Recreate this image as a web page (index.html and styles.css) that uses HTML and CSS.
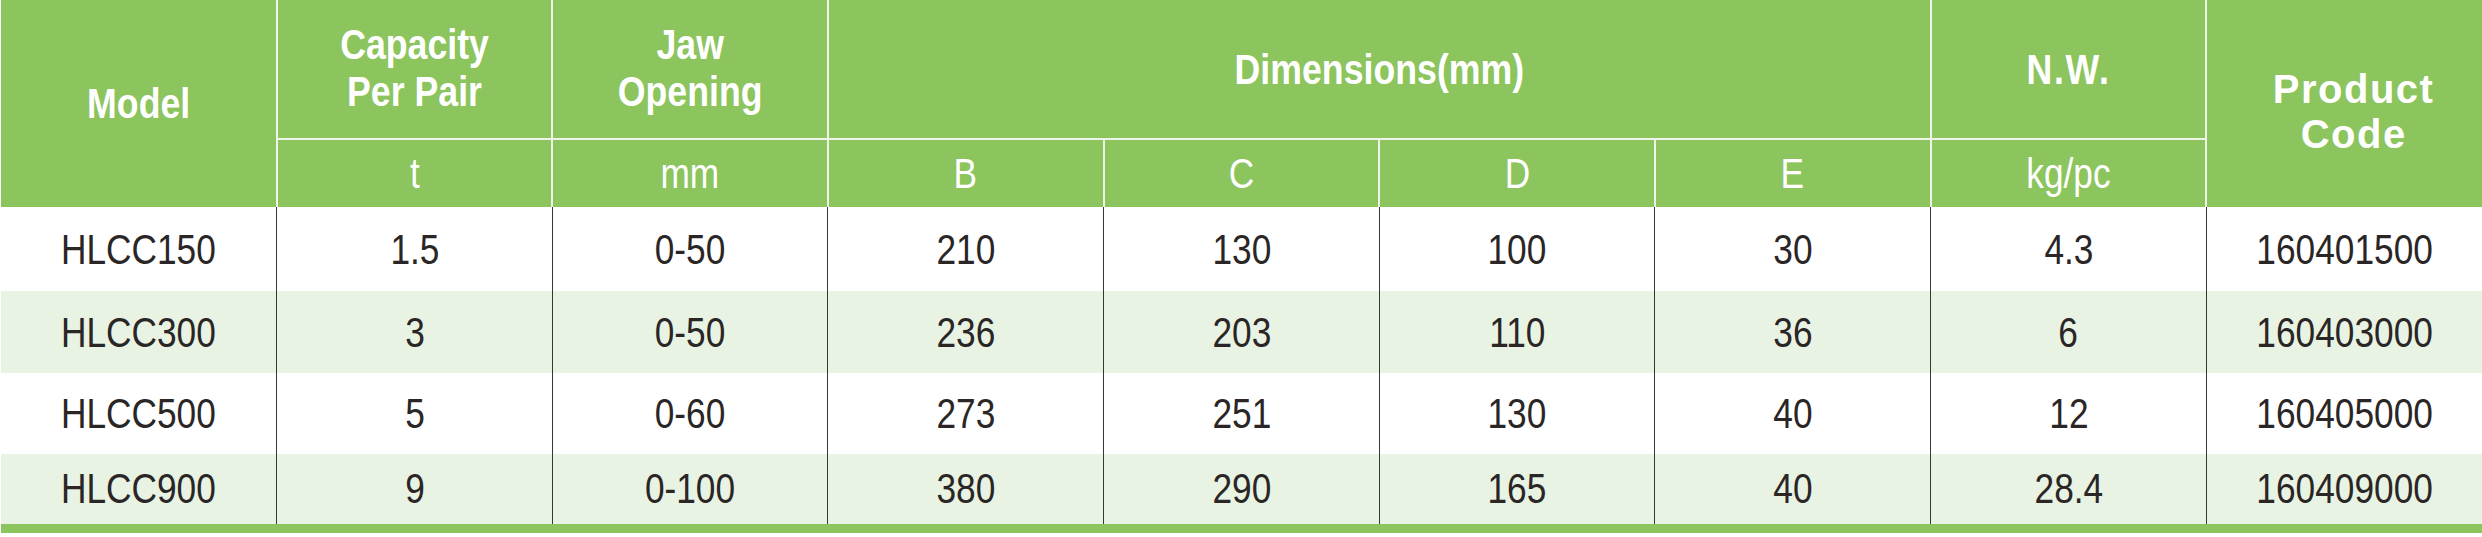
FILE: index.html
```html
<!DOCTYPE html>
<html lang="en">
<head>
<meta charset="utf-8">
<title>HLCC Specifications</title>
<link rel="stylesheet" href="styles.css">
</head>
<body>
<table class="spec">
  <colgroup>
    <col><col><col><col><col><col><col><col><col>
  </colgroup>
  <thead>
    <tr class="head-top">
      <th rowspan="2" class="h-bold"><span class="n">Model</span></th>
      <th class="h-bold h-two"><span class="n">Capacity<br>Per Pair</span></th>
      <th class="h-bold h-two"><span class="n">Jaw<br>Opening</span></th>
      <th colspan="4" class="h-bold"><span class="n">Dimensions(mm)</span></th>
      <th class="h-bold"><span class="n nw">N.W.</span></th>
      <th rowspan="2" class="h-code">Product<br>Code</th>
    </tr>
    <tr class="head-sub">
      <th><span class="n">t</span></th>
      <th><span class="n">mm</span></th>
      <th><span class="n">B</span></th>
      <th><span class="n">C</span></th>
      <th><span class="n">D</span></th>
      <th><span class="n">E</span></th>
      <th><span class="n">kg/pc</span></th>
    </tr>
  </thead>
  <tbody>
    <tr class="r1">
      <td><span class="n">HLCC150</span></td><td><span class="n">1.5</span></td><td><span class="n">0-50</span></td><td><span class="n">210</span></td><td><span class="n">130</span></td><td><span class="n">100</span></td><td><span class="n">30</span></td><td><span class="n">4.3</span></td><td><span class="n">160401500</span></td>
    </tr>
    <tr class="r2 alt">
      <td><span class="n">HLCC300</span></td><td><span class="n">3</span></td><td><span class="n">0-50</span></td><td><span class="n">236</span></td><td><span class="n">203</span></td><td><span class="n">110</span></td><td><span class="n">36</span></td><td><span class="n">6</span></td><td><span class="n">160403000</span></td>
    </tr>
    <tr class="r3">
      <td><span class="n">HLCC500</span></td><td><span class="n">5</span></td><td><span class="n">0-60</span></td><td><span class="n">273</span></td><td><span class="n">251</span></td><td><span class="n">130</span></td><td><span class="n">40</span></td><td><span class="n">12</span></td><td><span class="n">160405000</span></td>
    </tr>
    <tr class="r4 alt">
      <td><span class="n">HLCC900</span></td><td><span class="n">9</span></td><td><span class="n">0-100</span></td><td><span class="n">380</span></td><td><span class="n">290</span></td><td><span class="n">165</span></td><td><span class="n">40</span></td><td><span class="n">28.4</span></td><td><span class="n">160409000</span></td>
    </tr>
  </tbody>
</table>
</body>
</html>
```
FILE: styles.css
```css
html, body {
  margin: 0;
  padding: 0;
  background: #ffffff;
}

body {
  padding-left: 1px;
}

.spec {
  width: 2481px;
  table-layout: fixed;
  border-collapse: collapse;
  font-family: "Liberation Sans", Arial, sans-serif;
  color: #2b2626;
}

/* Arial Narrow look: condensed Liberation Sans */
.n {
  display: inline-block;
  transform: scaleX(0.82);
  transform-origin: center center;
  white-space: nowrap;
}

.spec th {
  background: #8cc45d;
  color: #ffffff;
  padding: 0;
  text-align: center;
  vertical-align: middle;
  border: 2px solid #eef4e8;
  border-top: none;
  font-weight: normal;
  font-size: 43px;
}

.spec thead th:first-child {
  border-left: none;
}

.spec thead th:last-child {
  border-right: none;
}

.spec thead tr.head-sub th,
.spec thead th[rowspan] {
  border-bottom: none;
}

.head-top {
  height: 139px;
}

.head-sub {
  height: 68px;
}

.spec th.h-bold {
  font-weight: bold;
  font-size: 42px;
  line-height: 47px;
}

.spec th.h-bold .n {
  transform: scaleX(0.85);
}

.spec th.h-bold .nw {
  letter-spacing: 2px;
}

.spec th.h-two {
  padding-bottom: 2px;
}

.spec th.h-code {
  font-weight: bold;
  font-size: 40px;
  line-height: 45px;
  letter-spacing: 1.5px;
  padding-top: 16px;
  padding-left: 18px;
}

.spec td {
  padding: 0;
  text-align: center;
  vertical-align: middle;
  font-size: 43px;
  border-left: 1px solid #3a3636;
}

.spec td:first-child {
  border-left: none;
}

.r1 { height: 84px; }
.r2 { height: 82px; }
.r3 { height: 81px; }
.r4 { height: 74px; }

.alt td {
  background: #e8f3e3;
}

.spec tbody tr:last-child td {
  border-bottom: 9px solid #8cc45d;
}
```
